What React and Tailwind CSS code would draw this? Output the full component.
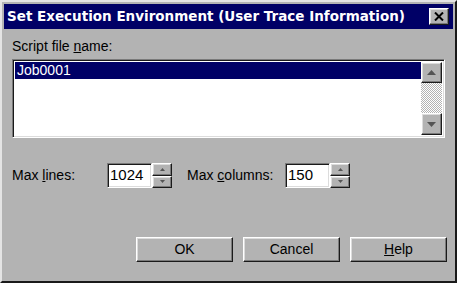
const raised = 'border border-t-white border-l-white border-r-[#1a1a1a] border-b-[#1a1a1a] shadow-[inset_-1px_-1px_0_#7a7a7a,inset_1px_1px_0_#dcdcdc]'
const sunken = 'border border-t-[#7a7a7a] border-l-[#7a7a7a] border-r-white border-b-white shadow-[inset_1px_1px_0_#1a1a1a,inset_-1px_-1px_0_#dcdcdc]'

function Arrow({ down, small }) {
  const w = small ? 5 : 9
  const h = small ? 3 : 5
  return (
    <svg width={w} height={h} viewBox={`0 0 ${w} ${h}`} className="block">
      {down ? (
        <polygon points={`0,0 ${w},0 ${w / 2},${h}`} fill="#555" />
      ) : (
        <polygon points={`0,${h} ${w},${h} ${w / 2},0`} fill="#555" />
      )}
    </svg>
  )
}

function Spinner({ value }) {
  return (
    <div className="flex h-[25px]">
      <div className={`${sunken} w-[45px] h-full bg-white flex items-center pl-[2px] text-[15px] text-black`}>
        {value}
      </div>
      <div className="flex flex-col w-[20px] h-full">
        <div className={`${raised} flex-1 bg-[#b3b3b3] flex items-center justify-center`}>
          <Arrow small />
        </div>
        <div className={`${raised} flex-1 bg-[#b3b3b3] flex items-center justify-center`}>
          <Arrow small down />
        </div>
      </div>
    </div>
  )
}

function Button({ children }) {
  return (
    <button
      type="button"
      className={`w-[97px] h-[25px] bg-[#b3b3b3] text-[14px] text-black ${raised} flex items-center justify-center`}
    >
      {children}
    </button>
  )
}

export default function App() {
  return (
    <div className="w-[457px] h-[283px] bg-[#b3b3b3] border-2 border-t-[#e4e4e4] border-l-[#e4e4e4] border-r-[#1a1a1a] border-b-[#1a1a1a] p-[2px] flex flex-col font-['Liberation_Sans',sans-serif] text-black select-none">
      {/* Title bar */}
      <div className="h-[25px] bg-[#000066] flex items-center justify-between pl-[3px] pr-[4px]">
        <span className="text-white font-bold text-[13.5px] leading-none whitespace-nowrap font-['DejaVu_Sans',sans-serif]">
          Set Execution Environment (User Trace Information)
        </span>
        <div className={`${raised} w-[20px] h-[17px] bg-[#b3b3b3] flex items-center justify-center`}>
          <svg width="10" height="9" viewBox="0 0 10 9">
            <path d="M1 0.5 L9 8.5 M9 0.5 L1 8.5" stroke="#000" strokeWidth="2" />
          </svg>
        </div>
      </div>

      {/* Body */}
      <div className="flex-1 flex flex-col pl-[8px] pr-[8px]">
        <div className="mt-[9px] text-[14px] leading-[16px]">
          Script file <span className="underline">n</span>ame:
        </div>

        <div className={`${sunken} mt-[5px] h-[79px] bg-white flex p-[2px]`}>
          <div className="flex-1">
            <div className="h-[17px] bg-[#000066] text-white text-[14px] leading-[17px] pl-[2px]">Job0001</div>
          </div>
          <div className="w-[21px] flex flex-col bg-[repeating-conic-gradient(#b3b3b3_0_25%,#ffffff_0_50%)] bg-[length:2px_2px]">
            <div className={`${raised} h-[21px] bg-[#b3b3b3] flex items-center justify-center`}>
              <Arrow />
            </div>
            <div className="flex-1" />
            <div className={`${raised} h-[22px] bg-[#b3b3b3] flex items-center justify-center`}>
              <Arrow down />
            </div>
          </div>
        </div>

        <div className="mt-[25px] flex items-center h-[25px] text-[14px]">
          <span className="w-[95px]">
            Max <span className="underline">l</span>ines:
          </span>
          <Spinner value="1024" />
          <span className="ml-[15px] w-[98px]">
            Max <span className="underline">c</span>olumns:
          </span>
          <Spinner value="150" />
        </div>

        <div className="mt-[49px] flex justify-end gap-[10px] mr-[-2px]">
          <Button>OK</Button>
          <Button>Cancel</Button>
          <Button>
            <span className="underline">H</span>elp
          </Button>
        </div>
      </div>
    </div>
  )
}
